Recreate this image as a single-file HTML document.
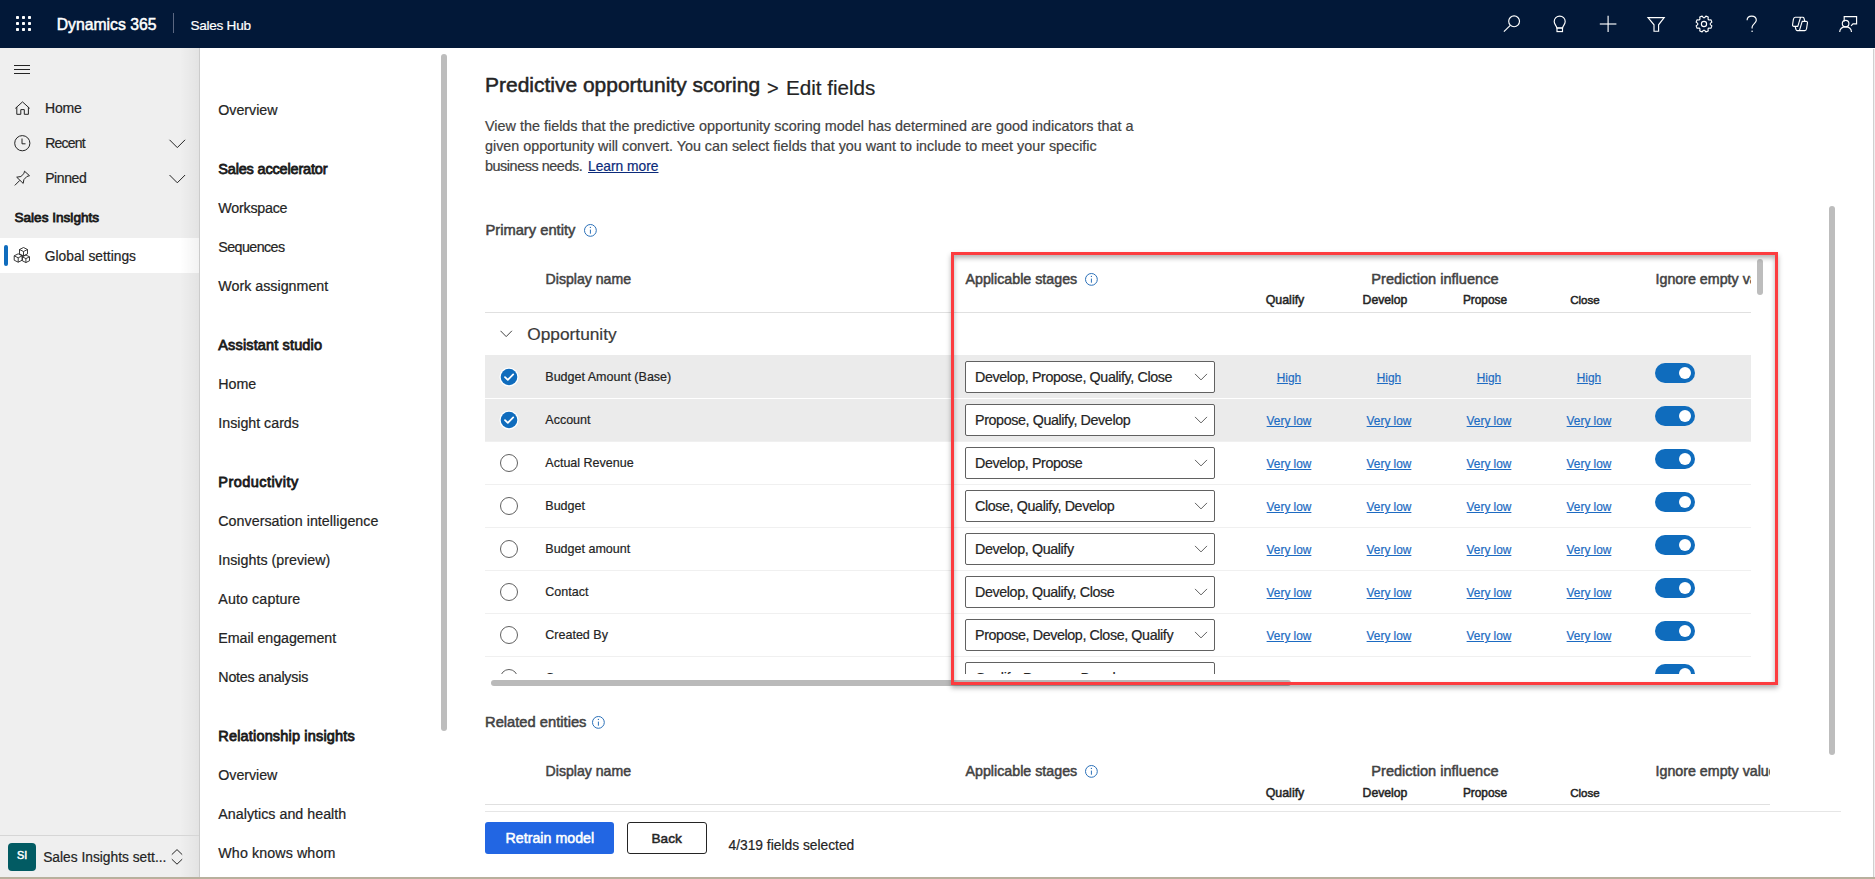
<!DOCTYPE html>
<html><head><meta charset="utf-8"><style>
html,body{margin:0;padding:0;}
body{width:1875px;height:879px;position:relative;overflow:hidden;background:#fff;font-family:"Liberation Sans", sans-serif;}
.r{position:absolute;}
.t{position:absolute;white-space:nowrap;}
</style></head><body>
<div class="r" style="left:0px;top:0px;width:1875px;height:48px;background:#021838;"></div>
<div class="r" style="left:15.9px;top:15.9px;width:3.2px;height:3.2px;background:#fff;border-radius:0.8px;"></div>
<div class="r" style="left:15.9px;top:21.9px;width:3.2px;height:3.2px;background:#fff;border-radius:0.8px;"></div>
<div class="r" style="left:15.9px;top:27.9px;width:3.2px;height:3.2px;background:#fff;border-radius:0.8px;"></div>
<div class="r" style="left:21.9px;top:15.9px;width:3.2px;height:3.2px;background:#fff;border-radius:0.8px;"></div>
<div class="r" style="left:21.9px;top:21.9px;width:3.2px;height:3.2px;background:#fff;border-radius:0.8px;"></div>
<div class="r" style="left:21.9px;top:27.9px;width:3.2px;height:3.2px;background:#fff;border-radius:0.8px;"></div>
<div class="r" style="left:27.9px;top:15.9px;width:3.2px;height:3.2px;background:#fff;border-radius:0.8px;"></div>
<div class="r" style="left:27.9px;top:21.9px;width:3.2px;height:3.2px;background:#fff;border-radius:0.8px;"></div>
<div class="r" style="left:27.9px;top:27.9px;width:3.2px;height:3.2px;background:#fff;border-radius:0.8px;"></div>
<div class="t" style="left:56.7px;top:15px;font-size:15.74px;line-height:19.68px;font-weight:400;color:#fff;-webkit-text-stroke:0.5px #fff;">Dynamics 365</div>
<div class="r" style="left:173px;top:13px;width:1px;height:20px;background:#5b6781;"></div>
<div class="t" style="left:190.5px;top:17px;font-size:13.6px;line-height:17.0px;font-weight:400;color:#fff;-webkit-text-stroke:0.2px #fff;letter-spacing:-0.281px;">Sales Hub</div>
<svg class="r" style="left:0;top:0" width="1875" height="48"><circle cx="1514.1" cy="21.3" r="5.4" stroke="#fff" fill="none" stroke-width="1.15"/><line x1="1503.9" y1="31.7" x2="1510.3" y2="25.3" stroke="#fff" fill="none" stroke-width="1.15"/><path d="M1556.8,28 C1556.6,25.8 1554.2,24.6 1554.2,21.6 A5.5,5.5 0 1 1 1565.2,21.6 C1565.2,24.6 1562.8,25.8 1562.6,28 Z" stroke="#fff" fill="none" stroke-width="1.15"/><rect x="1557" y="28" width="5.5" height="3.6" stroke="#fff" fill="none" stroke-width="1.15"/><line x1="1599.8" y1="24" x2="1616.4" y2="24" stroke="#fff" fill="none" stroke-width="1.15"/><line x1="1608.1" y1="15.8" x2="1608.1" y2="32" stroke="#fff" fill="none" stroke-width="1.15"/><path d="M1648,17.6 H1664.2 L1658.6,24.8 V31.2 H1654 V24.8 Z" stroke="#fff" fill="none" stroke-width="1.15"/><path d="M1704.60,17.73 L1705.89,16.12 L1708.23,17.09 L1708.01,19.14 L1708.86,19.99 L1710.91,19.77 L1711.88,22.11 L1710.27,23.40 L1710.27,24.60 L1711.88,25.89 L1710.91,28.23 L1708.86,28.01 L1708.01,28.86 L1708.23,30.91 L1705.89,31.88 L1704.60,30.27 L1703.40,30.27 L1702.11,31.88 L1699.77,30.91 L1699.99,28.86 L1699.14,28.01 L1697.09,28.23 L1696.12,25.89 L1697.73,24.60 L1697.73,23.40 L1696.12,22.11 L1697.09,19.77 L1699.14,19.99 L1699.99,19.14 L1699.77,17.09 L1702.11,16.12 L1703.40,17.73 Z" stroke="#fff" fill="none" stroke-width="1.15" stroke-linejoin="round"/><circle cx="1704" cy="24" r="2.6" stroke="#fff" fill="none" stroke-width="1.15"/><path d="M1747.1,20.2 C1747.1,17.6 1749.1,16.1 1751.7,16.1 C1754.4,16.1 1756.3,17.9 1756.3,20.3 C1756.3,23.1 1752.4,24 1752.1,27 V28.6" stroke="#fff" fill="none" stroke-width="1.15"/><circle cx="1752.1" cy="31.2" r="0.8" fill="#fff"/><path d="M1795.2,17.2 H1800.6 L1797.8,26.3 H1794 Q1792.3,26.3 1792.6,24.5 L1793.4,19.3 Q1793.8,17.2 1795.2,17.2 Z M1804.8,30.6 H1799.4 L1802.2,21.3 H1806 Q1807.7,21.3 1807.4,23.1 L1806.6,28.5 Q1806.2,30.6 1804.8,30.6 Z M1800.6,17.2 H1802.9 Q1803.6,17.2 1804,18.3 L1804.9,21.3 M1799.4,30.6 H1797.1 Q1796.4,30.6 1796,29.5 L1795.1,26.3" stroke="#fff" fill="none" stroke-width="1.15" stroke-width="1" stroke-linejoin="round"/><path d="M1844.2,21.5 V16.6 H1856.6 V23.9 H1853 L1851,25.8" stroke="#fff" fill="none" stroke-width="1.15"/><circle cx="1845.6" cy="23.6" r="3.3" stroke="#fff" fill="none" stroke-width="1.15"/><path d="M1839.7,32 C1839.9,28.8 1842.3,26.9 1845.6,26.9 C1848.9,26.9 1851.3,28.8 1851.5,32" stroke="#fff" fill="none" stroke-width="1.15"/></svg>
<div class="r" style="left:0px;top:48px;width:199px;height:829px;background:#efefef;"></div>
<div class="r" style="left:199px;top:48px;width:1px;height:829px;background:#cbcbcb;"></div>
<div class="r" style="left:14px;top:64.5px;width:16px;height:1px;background:#242424;"></div>
<div class="r" style="left:14px;top:68.5px;width:16px;height:1px;background:#242424;"></div>
<div class="r" style="left:14px;top:72.5px;width:16px;height:1px;background:#242424;"></div>
<svg class="r" style="left:0;top:0" width="200" height="879"><path d="M15.3,108.4 L22.5,101.9 L29.7,108.4 M16.8,107 V114.3 H20.8 V109.6 H24.3 V114.3 H28.4 V107" stroke="#242424" fill="none" stroke-width="1" stroke-linejoin="round"/><circle cx="22.3" cy="143.2" r="7.6" stroke="#242424" fill="none" stroke-width="1"/><path d="M22,138.5 V143.8 H25.5" stroke="#242424" fill="none" stroke-width="1"/><path d="M24.5,171.2 L29.5,175.7 L26.9,176.5 L23.9,179.6 L23.2,183.4 L16.7,177.2 L20.9,176.5 L23.9,173.6 Z M19.8,180.4 L14.8,185.4" stroke="#242424" fill="none" stroke-width="1" stroke-linejoin="round"/><path d="M169.5,139.8 L177.3,147.6 L185.1,139.8" stroke="#242424" fill="none" stroke-width="1"/><path d="M169.5,175 L177.3,182.8 L185.1,175" stroke="#242424" fill="none" stroke-width="1"/></svg>
<div class="t" style="left:45px;top:100px;font-size:14px;line-height:17.5px;font-weight:400;color:#242424;-webkit-text-stroke:0.2px #242424;letter-spacing:-0.148px;">Home</div>
<div class="t" style="left:45.2px;top:135px;font-size:14px;line-height:17.5px;font-weight:400;color:#242424;-webkit-text-stroke:0.2px #242424;letter-spacing:-0.771px;">Recent</div>
<div class="t" style="left:45.2px;top:170px;font-size:14px;line-height:17.5px;font-weight:400;color:#242424;-webkit-text-stroke:0.2px #242424;letter-spacing:-0.418px;">Pinned</div>
<div class="t" style="left:14.4px;top:209px;font-size:13.62px;line-height:17.02px;font-weight:400;color:#1a1a1a;-webkit-text-stroke:0.8px #1a1a1a;">Sales Insights</div>
<div class="r" style="left:0px;top:238px;width:199px;height:35px;background:#fff;"></div>
<div class="r" style="left:180px;top:48px;width:19px;height:829px;background:linear-gradient(to right, rgba(0,0,0,0) 0%, rgba(0,0,0,0.05) 100%);"></div>
<div class="r" style="left:4px;top:245px;width:3.5px;height:21px;background:#0f6cbd;border-radius:2px;"></div>
<svg class="r" style="left:0;top:0" width="200" height="879"><path d="M19.5,249.5 L23.5,247.5 L27.5,249.5 V253.9 L23.5,255.9 L19.5,253.9 Z M19.5,249.5 L23.5,251.5 L27.5,249.5 M23.5,251.5 V255.9" stroke="#242424" fill="none" stroke-width="0.9" stroke-linejoin="round"/><path d="M14.2,255.8 L18.2,253.8 L22.2,255.8 V260.2 L18.2,262.2 L14.2,260.2 Z M14.2,255.8 L18.2,257.8 L22.2,255.8 M18.2,257.8 V262.2" stroke="#242424" fill="none" stroke-width="0.9" stroke-linejoin="round"/><path d="M22.3,256.8 L25.900000000000002,255 L29.5,256.8 V260.76 L25.900000000000002,262.56 L22.3,260.76 Z M22.3,256.8 L25.900000000000002,258.6 L29.5,256.8 M25.900000000000002,258.6 V262.56" stroke="#242424" fill="none" stroke-width="0.9" stroke-linejoin="round"/></svg>
<div class="t" style="left:44.8px;top:248px;font-size:13.79px;line-height:17.24px;font-weight:400;color:#242424;-webkit-text-stroke:0.2px #242424;">Global settings</div>
<div class="r" style="left:0px;top:835px;width:199px;height:1px;background:#d6d6d6;"></div>
<div class="r" style="left:8px;top:843px;width:28px;height:28px;background:#025b63;border-radius:4px;"></div>
<div class="t" style="left:17px;top:849px;font-size:10.8px;line-height:13.5px;font-weight:400;color:#fff;-webkit-text-stroke:0.5px #fff;">SI</div>
<div class="t" style="left:43.2px;top:849px;font-size:13.77px;line-height:17.21px;font-weight:400;color:#242424;-webkit-text-stroke:0.2px #242424;">Sales Insights sett...</div>
<svg class="r" style="left:0;top:0" width="200" height="879"><path d="M171.8,854.6 L177,849.6 L182.2,854.6 M171.8,859.2 L177,864.2 L182.2,859.2" stroke="#242424" fill="none" stroke-width="1"/></svg>
<div class="r" style="left:441px;top:54px;width:6px;height:677px;background:#bdbdbd;border-radius:3px;"></div>
<div class="t" style="left:218.3px;top:102px;font-size:14.25px;line-height:17.81px;font-weight:400;color:#242424;-webkit-text-stroke:0.2px #242424;letter-spacing:-0.026px;">Overview</div>
<div class="t" style="left:218.3px;top:160px;font-size:14.5px;line-height:18.12px;font-weight:400;color:#1a1a1a;-webkit-text-stroke:0.8px #1a1a1a;letter-spacing:-0.176px;">Sales accelerator</div>
<div class="t" style="left:218.3px;top:200px;font-size:14.25px;line-height:17.81px;font-weight:400;color:#242424;-webkit-text-stroke:0.2px #242424;letter-spacing:-0.226px;">Workspace</div>
<div class="t" style="left:218.3px;top:239px;font-size:14.25px;line-height:17.81px;font-weight:400;color:#242424;-webkit-text-stroke:0.2px #242424;letter-spacing:-0.575px;">Sequences</div>
<div class="t" style="left:218.3px;top:278px;font-size:14.25px;line-height:17.81px;font-weight:400;color:#242424;-webkit-text-stroke:0.2px #242424;letter-spacing:0.01px;">Work assignment</div>
<div class="t" style="left:218.3px;top:336px;font-size:14.5px;line-height:18.12px;font-weight:400;color:#1a1a1a;-webkit-text-stroke:0.8px #1a1a1a;letter-spacing:0.144px;">Assistant studio</div>
<div class="t" style="left:218.3px;top:376px;font-size:14.25px;line-height:17.81px;font-weight:400;color:#242424;-webkit-text-stroke:0.2px #242424;letter-spacing:-0.003px;">Home</div>
<div class="t" style="left:218.3px;top:415px;font-size:14.25px;line-height:17.81px;font-weight:400;color:#242424;-webkit-text-stroke:0.2px #242424;letter-spacing:-0.015px;">Insight cards</div>
<div class="t" style="left:218.3px;top:473px;font-size:14.5px;line-height:18.12px;font-weight:400;color:#1a1a1a;-webkit-text-stroke:0.8px #1a1a1a;letter-spacing:0.451px;">Productivity</div>
<div class="t" style="left:218.3px;top:513px;font-size:14.25px;line-height:17.81px;font-weight:400;color:#242424;-webkit-text-stroke:0.2px #242424;letter-spacing:0.037px;">Conversation intelligence</div>
<div class="t" style="left:218.3px;top:552px;font-size:14.25px;line-height:17.81px;font-weight:400;color:#242424;-webkit-text-stroke:0.2px #242424;letter-spacing:0.02px;">Insights (preview)</div>
<div class="t" style="left:218.3px;top:591px;font-size:14.25px;line-height:17.81px;font-weight:400;color:#242424;-webkit-text-stroke:0.2px #242424;letter-spacing:0.109px;">Auto capture</div>
<div class="t" style="left:218.3px;top:630px;font-size:14.25px;line-height:17.81px;font-weight:400;color:#242424;-webkit-text-stroke:0.2px #242424;letter-spacing:-0.068px;">Email engagement</div>
<div class="t" style="left:218.3px;top:669px;font-size:14.25px;line-height:17.81px;font-weight:400;color:#242424;-webkit-text-stroke:0.2px #242424;letter-spacing:-0.205px;">Notes analysis</div>
<div class="t" style="left:218.3px;top:727px;font-size:14.5px;line-height:18.12px;font-weight:400;color:#1a1a1a;-webkit-text-stroke:0.8px #1a1a1a;letter-spacing:0.171px;">Relationship insights</div>
<div class="t" style="left:218.3px;top:767px;font-size:14.25px;line-height:17.81px;font-weight:400;color:#242424;-webkit-text-stroke:0.2px #242424;letter-spacing:-0.041px;">Overview</div>
<div class="t" style="left:218.3px;top:806px;font-size:14.25px;line-height:17.81px;font-weight:400;color:#242424;-webkit-text-stroke:0.2px #242424;letter-spacing:0.019px;">Analytics and health</div>
<div class="t" style="left:218.3px;top:845px;font-size:14.25px;line-height:17.81px;font-weight:400;color:#242424;-webkit-text-stroke:0.2px #242424;letter-spacing:0.106px;">Who knows whom</div>
<div class="r" style="left:1873px;top:49px;width:1px;height:828px;background:#d0d0d0;"></div>
<div class="r" style="left:1874px;top:49px;width:1px;height:828px;background:#f0f0f0;"></div>
<div class="r" style="left:0px;top:877px;width:1875px;height:2px;background:#b8b09d;"></div>
<div class="r" style="left:1829px;top:206px;width:6px;height:549px;background:#bdbdbd;border-radius:3px;"></div>
<div class="t" style="left:485px;top:72px;font-size:20.97px;line-height:26.21px;font-weight:400;color:#242424;-webkit-text-stroke:0.5px #242424;">Predictive opportunity scoring</div>
<div class="t" style="left:767px;top:76px;font-size:20px;line-height:25.0px;font-weight:400;color:#242424;-webkit-text-stroke:0.2px #242424;">&gt;</div>
<div class="t" style="left:786px;top:75px;font-size:20.62px;line-height:25.78px;font-weight:400;color:#242424;-webkit-text-stroke:0.2px #242424;">Edit fields</div>
<div class="t" style="left:485px;top:117px;font-size:14.4px;line-height:18.0px;font-weight:400;color:#424242;-webkit-text-stroke:0.2px #424242;">View the fields that the predictive opportunity scoring model has determined are good indicators that a</div>
<div class="t" style="left:485px;top:138px;font-size:14.34px;line-height:17.93px;font-weight:400;color:#424242;-webkit-text-stroke:0.2px #424242;">given opportunity will convert. You can select fields that you want to include to meet your specific</div>
<div class="t" style="left:485px;top:157px;font-size:14.4px;line-height:18.0px;font-weight:400;color:#424242;-webkit-text-stroke:0.2px #424242;letter-spacing:-0.45px;">business needs.</div>
<div class="t" style="left:588px;top:158px;font-size:13.79px;line-height:17.24px;font-weight:400;color:#0b2a7a;-webkit-text-stroke:0.2px #0b2a7a;text-decoration:underline;">Learn more</div>
<div class="t" style="left:485.4px;top:221px;font-size:14.74px;line-height:18.43px;font-weight:400;color:#424242;-webkit-text-stroke:0.5px #424242;">Primary entity</div>
<svg class="r" style="left:582.9px;top:223.0px;" width="14.8" height="14.8" viewBox="0 0 14.8 14.8"><circle cx="7.4" cy="7.4" r="5.9" stroke="#2a6fb8" fill="none" stroke-width="1"/><line x1="7.4" y1="6.6000000000000005" x2="7.4" y2="10.7" stroke="#2a6fb8" stroke-width="1"/><circle cx="7.4" cy="4.4" r="0.65" fill="#2a6fb8"/></svg>
<div class="r" style="left:485px;top:255px;width:1266px;height:419px;overflow:hidden;">
<div class="t" style="left:60.6px;top:16px;font-size:14.1px;line-height:17.62px;font-weight:400;color:#424242;-webkit-text-stroke:0.5px #424242;">Display name</div>
<div class="t" style="left:480.5px;top:16px;font-size:14.25px;line-height:17.81px;font-weight:400;color:#424242;-webkit-text-stroke:0.5px #424242;">Applicable stages</div>
<svg class="r" style="left:599.3000000000001px;top:17.1px;" width="14.8" height="14.8" viewBox="0 0 14.8 14.8"><circle cx="7.4" cy="7.4" r="5.9" stroke="#2a6fb8" fill="none" stroke-width="1"/><line x1="7.4" y1="6.6000000000000005" x2="7.4" y2="10.7" stroke="#2a6fb8" stroke-width="1"/><circle cx="7.4" cy="4.4" r="0.65" fill="#2a6fb8"/></svg>
<div class="t" style="left:886.3px;top:15px;font-size:14.59px;line-height:18.24px;font-weight:400;color:#424242;-webkit-text-stroke:0.5px #424242;">Prediction influence</div>
<div class="t" style="left:1170.5px;top:16px;font-size:14.25px;line-height:17.81px;font-weight:400;color:#424242;-webkit-text-stroke:0.5px #424242;">Ignore empty values</div>
<div class="t" style="left:780.65px;top:38px;font-size:12.43px;line-height:15.54px;font-weight:400;color:#242424;-webkit-text-stroke:0.5px #242424;">Qualify</div>
<div class="t" style="left:877.6px;top:38px;font-size:12.21px;line-height:15.26px;font-weight:400;color:#242424;-webkit-text-stroke:0.5px #242424;">Develop</div>
<div class="t" style="left:977.9px;top:38px;font-size:11.87px;line-height:14.84px;font-weight:400;color:#242424;-webkit-text-stroke:0.5px #242424;">Propose</div>
<div class="t" style="left:1085.2px;top:38px;font-size:11.58px;line-height:14.47px;font-weight:400;color:#242424;-webkit-text-stroke:0.5px #242424;">Close</div>
<div class="r" style="left:0px;top:57px;width:1266px;height:1px;background:#e0e0e0;"></div>
<svg class="r" style="left:15px;top:75px;" width="13" height="8" viewBox="0 0 13 8"><path d="M0.5,0.8 L6.2,6.6 L11.9,0.8" stroke="#424242" fill="none" stroke-width="1"/></svg>
<div class="t" style="left:42.3px;top:69px;font-size:17.3px;line-height:21.62px;font-weight:400;color:#3b3a39;-webkit-text-stroke:0.2px #3b3a39;">Opportunity</div>
<div class="r" style="left:0px;top:100px;width:1266px;height:43px;background:#ebebeb;"></div>
<svg class="r" style="left:14px;top:112px;" width="20" height="20" viewBox="0 0 20 20"><circle cx="10" cy="10" r="9.6" fill="#fff"/><circle cx="10" cy="10" r="8.3" fill="#0f6cbd"/><path d="M6,10.2 L8.8,12.9 L14.2,7.4" stroke="#fff" stroke-width="1.8" fill="none" stroke-linecap="round" stroke-linejoin="round"/></svg>
<div class="t" style="left:60.3px;top:115px;font-size:12.52px;line-height:15.65px;font-weight:400;color:#242424;-webkit-text-stroke:0.2px #242424;">Budget Amount (Base)</div>
<div class="r" style="left:480px;top:106px;width:250px;height:32px;background:#fff;border:1px solid #616161;border-radius:2px;box-sizing:border-box;"></div>
<div class="t" style="left:490px;top:114px;font-size:14.3px;line-height:17.88px;font-weight:400;color:#242424;-webkit-text-stroke:0.2px #242424;letter-spacing:-0.389px;">Develop, Propose, Qualify, Close</div>
<svg class="r" style="left:709px;top:118px;" width="14" height="8" viewBox="0 0 14 8"><path d="M1,0.9 L7,6.9 L13,0.9" stroke="#616161" fill="none" stroke-width="1"/></svg>
<div class="t" style="left:791.81px;top:116px;font-size:11.85px;line-height:14.81px;font-weight:400;color:#1d6bc2;-webkit-text-stroke:0.2px #1d6bc2;text-decoration:underline;">High</div>
<div class="t" style="left:891.81px;top:116px;font-size:11.85px;line-height:14.81px;font-weight:400;color:#1d6bc2;-webkit-text-stroke:0.2px #1d6bc2;text-decoration:underline;">High</div>
<div class="t" style="left:991.81px;top:116px;font-size:11.85px;line-height:14.81px;font-weight:400;color:#1d6bc2;-webkit-text-stroke:0.2px #1d6bc2;text-decoration:underline;">High</div>
<div class="t" style="left:1091.81px;top:116px;font-size:11.85px;line-height:14.81px;font-weight:400;color:#1d6bc2;-webkit-text-stroke:0.2px #1d6bc2;text-decoration:underline;">High</div>
<div class="r" style="left:1170px;top:107.6px;width:40px;height:20px;background:#0f6cbd;border-radius:10px;"></div>
<div class="r" style="left:1194px;top:111.6px;width:12px;height:12px;background:#fff;border-radius:6px;"></div>
<div class="r" style="left:0px;top:143px;width:1266px;height:43px;background:#ebebeb;"></div>
<svg class="r" style="left:14px;top:155px;" width="20" height="20" viewBox="0 0 20 20"><circle cx="10" cy="10" r="9.6" fill="#fff"/><circle cx="10" cy="10" r="8.3" fill="#0f6cbd"/><path d="M6,10.2 L8.8,12.9 L14.2,7.4" stroke="#fff" stroke-width="1.8" fill="none" stroke-linecap="round" stroke-linejoin="round"/></svg>
<div class="t" style="left:60.3px;top:158px;font-size:12.52px;line-height:15.65px;font-weight:400;color:#242424;-webkit-text-stroke:0.2px #242424;">Account</div>
<div class="r" style="left:480px;top:149px;width:250px;height:32px;background:#fff;border:1px solid #616161;border-radius:2px;box-sizing:border-box;"></div>
<div class="t" style="left:490px;top:157px;font-size:14.3px;line-height:17.88px;font-weight:400;color:#242424;-webkit-text-stroke:0.2px #242424;letter-spacing:-0.389px;">Propose, Qualify, Develop</div>
<svg class="r" style="left:709px;top:161px;" width="14" height="8" viewBox="0 0 14 8"><path d="M1,0.9 L7,6.9 L13,0.9" stroke="#616161" fill="none" stroke-width="1"/></svg>
<div class="t" style="left:781.61px;top:159px;font-size:11.85px;line-height:14.81px;font-weight:400;color:#1d6bc2;-webkit-text-stroke:0.2px #1d6bc2;text-decoration:underline;">Very low</div>
<div class="t" style="left:881.61px;top:159px;font-size:11.85px;line-height:14.81px;font-weight:400;color:#1d6bc2;-webkit-text-stroke:0.2px #1d6bc2;text-decoration:underline;">Very low</div>
<div class="t" style="left:981.61px;top:159px;font-size:11.85px;line-height:14.81px;font-weight:400;color:#1d6bc2;-webkit-text-stroke:0.2px #1d6bc2;text-decoration:underline;">Very low</div>
<div class="t" style="left:1081.61px;top:159px;font-size:11.85px;line-height:14.81px;font-weight:400;color:#1d6bc2;-webkit-text-stroke:0.2px #1d6bc2;text-decoration:underline;">Very low</div>
<div class="r" style="left:1170px;top:150.6px;width:40px;height:20px;background:#0f6cbd;border-radius:10px;"></div>
<div class="r" style="left:1194px;top:154.6px;width:12px;height:12px;background:#fff;border-radius:6px;"></div>
<svg class="r" style="left:14px;top:198px;" width="20" height="20" viewBox="0 0 20 20"><circle cx="10" cy="10" r="8.5" fill="none" stroke="#616161" stroke-width="1"/></svg>
<div class="t" style="left:60.3px;top:201px;font-size:12.52px;line-height:15.65px;font-weight:400;color:#242424;-webkit-text-stroke:0.2px #242424;">Actual Revenue</div>
<div class="r" style="left:480px;top:192px;width:250px;height:32px;background:#fff;border:1px solid #616161;border-radius:2px;box-sizing:border-box;"></div>
<div class="t" style="left:490px;top:200px;font-size:14.3px;line-height:17.88px;font-weight:400;color:#242424;-webkit-text-stroke:0.2px #242424;letter-spacing:-0.389px;">Develop, Propose</div>
<svg class="r" style="left:709px;top:204px;" width="14" height="8" viewBox="0 0 14 8"><path d="M1,0.9 L7,6.9 L13,0.9" stroke="#616161" fill="none" stroke-width="1"/></svg>
<div class="t" style="left:781.61px;top:202px;font-size:11.85px;line-height:14.81px;font-weight:400;color:#1d6bc2;-webkit-text-stroke:0.2px #1d6bc2;text-decoration:underline;">Very low</div>
<div class="t" style="left:881.61px;top:202px;font-size:11.85px;line-height:14.81px;font-weight:400;color:#1d6bc2;-webkit-text-stroke:0.2px #1d6bc2;text-decoration:underline;">Very low</div>
<div class="t" style="left:981.61px;top:202px;font-size:11.85px;line-height:14.81px;font-weight:400;color:#1d6bc2;-webkit-text-stroke:0.2px #1d6bc2;text-decoration:underline;">Very low</div>
<div class="t" style="left:1081.61px;top:202px;font-size:11.85px;line-height:14.81px;font-weight:400;color:#1d6bc2;-webkit-text-stroke:0.2px #1d6bc2;text-decoration:underline;">Very low</div>
<div class="r" style="left:1170px;top:193.6px;width:40px;height:20px;background:#0f6cbd;border-radius:10px;"></div>
<div class="r" style="left:1194px;top:197.6px;width:12px;height:12px;background:#fff;border-radius:6px;"></div>
<svg class="r" style="left:14px;top:241px;" width="20" height="20" viewBox="0 0 20 20"><circle cx="10" cy="10" r="8.5" fill="none" stroke="#616161" stroke-width="1"/></svg>
<div class="t" style="left:60.3px;top:244px;font-size:12.52px;line-height:15.65px;font-weight:400;color:#242424;-webkit-text-stroke:0.2px #242424;">Budget</div>
<div class="r" style="left:480px;top:235px;width:250px;height:32px;background:#fff;border:1px solid #616161;border-radius:2px;box-sizing:border-box;"></div>
<div class="t" style="left:490px;top:243px;font-size:14.3px;line-height:17.88px;font-weight:400;color:#242424;-webkit-text-stroke:0.2px #242424;letter-spacing:-0.389px;">Close, Qualify, Develop</div>
<svg class="r" style="left:709px;top:247px;" width="14" height="8" viewBox="0 0 14 8"><path d="M1,0.9 L7,6.9 L13,0.9" stroke="#616161" fill="none" stroke-width="1"/></svg>
<div class="t" style="left:781.61px;top:245px;font-size:11.85px;line-height:14.81px;font-weight:400;color:#1d6bc2;-webkit-text-stroke:0.2px #1d6bc2;text-decoration:underline;">Very low</div>
<div class="t" style="left:881.61px;top:245px;font-size:11.85px;line-height:14.81px;font-weight:400;color:#1d6bc2;-webkit-text-stroke:0.2px #1d6bc2;text-decoration:underline;">Very low</div>
<div class="t" style="left:981.61px;top:245px;font-size:11.85px;line-height:14.81px;font-weight:400;color:#1d6bc2;-webkit-text-stroke:0.2px #1d6bc2;text-decoration:underline;">Very low</div>
<div class="t" style="left:1081.61px;top:245px;font-size:11.85px;line-height:14.81px;font-weight:400;color:#1d6bc2;-webkit-text-stroke:0.2px #1d6bc2;text-decoration:underline;">Very low</div>
<div class="r" style="left:1170px;top:236.6px;width:40px;height:20px;background:#0f6cbd;border-radius:10px;"></div>
<div class="r" style="left:1194px;top:240.6px;width:12px;height:12px;background:#fff;border-radius:6px;"></div>
<svg class="r" style="left:14px;top:284px;" width="20" height="20" viewBox="0 0 20 20"><circle cx="10" cy="10" r="8.5" fill="none" stroke="#616161" stroke-width="1"/></svg>
<div class="t" style="left:60.3px;top:287px;font-size:12.52px;line-height:15.65px;font-weight:400;color:#242424;-webkit-text-stroke:0.2px #242424;">Budget amount</div>
<div class="r" style="left:480px;top:278px;width:250px;height:32px;background:#fff;border:1px solid #616161;border-radius:2px;box-sizing:border-box;"></div>
<div class="t" style="left:490px;top:286px;font-size:14.3px;line-height:17.88px;font-weight:400;color:#242424;-webkit-text-stroke:0.2px #242424;letter-spacing:-0.389px;">Develop, Qualify</div>
<svg class="r" style="left:709px;top:290px;" width="14" height="8" viewBox="0 0 14 8"><path d="M1,0.9 L7,6.9 L13,0.9" stroke="#616161" fill="none" stroke-width="1"/></svg>
<div class="t" style="left:781.61px;top:288px;font-size:11.85px;line-height:14.81px;font-weight:400;color:#1d6bc2;-webkit-text-stroke:0.2px #1d6bc2;text-decoration:underline;">Very low</div>
<div class="t" style="left:881.61px;top:288px;font-size:11.85px;line-height:14.81px;font-weight:400;color:#1d6bc2;-webkit-text-stroke:0.2px #1d6bc2;text-decoration:underline;">Very low</div>
<div class="t" style="left:981.61px;top:288px;font-size:11.85px;line-height:14.81px;font-weight:400;color:#1d6bc2;-webkit-text-stroke:0.2px #1d6bc2;text-decoration:underline;">Very low</div>
<div class="t" style="left:1081.61px;top:288px;font-size:11.85px;line-height:14.81px;font-weight:400;color:#1d6bc2;-webkit-text-stroke:0.2px #1d6bc2;text-decoration:underline;">Very low</div>
<div class="r" style="left:1170px;top:279.6px;width:40px;height:20px;background:#0f6cbd;border-radius:10px;"></div>
<div class="r" style="left:1194px;top:283.6px;width:12px;height:12px;background:#fff;border-radius:6px;"></div>
<svg class="r" style="left:14px;top:327px;" width="20" height="20" viewBox="0 0 20 20"><circle cx="10" cy="10" r="8.5" fill="none" stroke="#616161" stroke-width="1"/></svg>
<div class="t" style="left:60.3px;top:330px;font-size:12.52px;line-height:15.65px;font-weight:400;color:#242424;-webkit-text-stroke:0.2px #242424;">Contact</div>
<div class="r" style="left:480px;top:321px;width:250px;height:32px;background:#fff;border:1px solid #616161;border-radius:2px;box-sizing:border-box;"></div>
<div class="t" style="left:490px;top:329px;font-size:14.3px;line-height:17.88px;font-weight:400;color:#242424;-webkit-text-stroke:0.2px #242424;letter-spacing:-0.389px;">Develop, Qualify, Close</div>
<svg class="r" style="left:709px;top:333px;" width="14" height="8" viewBox="0 0 14 8"><path d="M1,0.9 L7,6.9 L13,0.9" stroke="#616161" fill="none" stroke-width="1"/></svg>
<div class="t" style="left:781.61px;top:331px;font-size:11.85px;line-height:14.81px;font-weight:400;color:#1d6bc2;-webkit-text-stroke:0.2px #1d6bc2;text-decoration:underline;">Very low</div>
<div class="t" style="left:881.61px;top:331px;font-size:11.85px;line-height:14.81px;font-weight:400;color:#1d6bc2;-webkit-text-stroke:0.2px #1d6bc2;text-decoration:underline;">Very low</div>
<div class="t" style="left:981.61px;top:331px;font-size:11.85px;line-height:14.81px;font-weight:400;color:#1d6bc2;-webkit-text-stroke:0.2px #1d6bc2;text-decoration:underline;">Very low</div>
<div class="t" style="left:1081.61px;top:331px;font-size:11.85px;line-height:14.81px;font-weight:400;color:#1d6bc2;-webkit-text-stroke:0.2px #1d6bc2;text-decoration:underline;">Very low</div>
<div class="r" style="left:1170px;top:322.6px;width:40px;height:20px;background:#0f6cbd;border-radius:10px;"></div>
<div class="r" style="left:1194px;top:326.6px;width:12px;height:12px;background:#fff;border-radius:6px;"></div>
<svg class="r" style="left:14px;top:370px;" width="20" height="20" viewBox="0 0 20 20"><circle cx="10" cy="10" r="8.5" fill="none" stroke="#616161" stroke-width="1"/></svg>
<div class="t" style="left:60.3px;top:373px;font-size:12.52px;line-height:15.65px;font-weight:400;color:#242424;-webkit-text-stroke:0.2px #242424;">Created By</div>
<div class="r" style="left:480px;top:364px;width:250px;height:32px;background:#fff;border:1px solid #616161;border-radius:2px;box-sizing:border-box;"></div>
<div class="t" style="left:490px;top:372px;font-size:14.3px;line-height:17.88px;font-weight:400;color:#242424;-webkit-text-stroke:0.2px #242424;letter-spacing:-0.389px;">Propose, Develop, Close, Qualify</div>
<svg class="r" style="left:709px;top:376px;" width="14" height="8" viewBox="0 0 14 8"><path d="M1,0.9 L7,6.9 L13,0.9" stroke="#616161" fill="none" stroke-width="1"/></svg>
<div class="t" style="left:781.61px;top:374px;font-size:11.85px;line-height:14.81px;font-weight:400;color:#1d6bc2;-webkit-text-stroke:0.2px #1d6bc2;text-decoration:underline;">Very low</div>
<div class="t" style="left:881.61px;top:374px;font-size:11.85px;line-height:14.81px;font-weight:400;color:#1d6bc2;-webkit-text-stroke:0.2px #1d6bc2;text-decoration:underline;">Very low</div>
<div class="t" style="left:981.61px;top:374px;font-size:11.85px;line-height:14.81px;font-weight:400;color:#1d6bc2;-webkit-text-stroke:0.2px #1d6bc2;text-decoration:underline;">Very low</div>
<div class="t" style="left:1081.61px;top:374px;font-size:11.85px;line-height:14.81px;font-weight:400;color:#1d6bc2;-webkit-text-stroke:0.2px #1d6bc2;text-decoration:underline;">Very low</div>
<div class="r" style="left:1170px;top:365.6px;width:40px;height:20px;background:#0f6cbd;border-radius:10px;"></div>
<div class="r" style="left:1194px;top:369.6px;width:12px;height:12px;background:#fff;border-radius:6px;"></div>
<svg class="r" style="left:14px;top:413px;" width="20" height="20" viewBox="0 0 20 20"><circle cx="10" cy="10" r="8.5" fill="none" stroke="#616161" stroke-width="1"/></svg>
<div class="t" style="left:60.3px;top:416px;font-size:12.52px;line-height:15.65px;font-weight:400;color:#242424;-webkit-text-stroke:0.2px #242424;">Currency</div>
<div class="r" style="left:480px;top:407px;width:250px;height:32px;background:#fff;border:1px solid #616161;border-radius:2px;box-sizing:border-box;"></div>
<div class="t" style="left:490px;top:415px;font-size:14.3px;line-height:17.88px;font-weight:400;color:#242424;-webkit-text-stroke:0.2px #242424;letter-spacing:-0.389px;">Qualify, Propose, Develop</div>
<svg class="r" style="left:709px;top:419px;" width="14" height="8" viewBox="0 0 14 8"><path d="M1,0.9 L7,6.9 L13,0.9" stroke="#616161" fill="none" stroke-width="1"/></svg>
<div class="t" style="left:781.61px;top:417px;font-size:11.85px;line-height:14.81px;font-weight:400;color:#1d6bc2;-webkit-text-stroke:0.2px #1d6bc2;text-decoration:underline;">Very low</div>
<div class="t" style="left:881.61px;top:417px;font-size:11.85px;line-height:14.81px;font-weight:400;color:#1d6bc2;-webkit-text-stroke:0.2px #1d6bc2;text-decoration:underline;">Very low</div>
<div class="t" style="left:981.61px;top:417px;font-size:11.85px;line-height:14.81px;font-weight:400;color:#1d6bc2;-webkit-text-stroke:0.2px #1d6bc2;text-decoration:underline;">Very low</div>
<div class="t" style="left:1081.61px;top:417px;font-size:11.85px;line-height:14.81px;font-weight:400;color:#1d6bc2;-webkit-text-stroke:0.2px #1d6bc2;text-decoration:underline;">Very low</div>
<div class="r" style="left:1170px;top:408.6px;width:40px;height:20px;background:#0f6cbd;border-radius:10px;"></div>
<div class="r" style="left:1194px;top:412.6px;width:12px;height:12px;background:#fff;border-radius:6px;"></div>
<div class="r" style="left:0px;top:143px;width:1266px;height:1px;background:#ffffff;"></div>
<div class="r" style="left:0px;top:186px;width:1266px;height:1px;background:#f0f0f0;"></div>
<div class="r" style="left:0px;top:229px;width:1266px;height:1px;background:#f0f0f0;"></div>
<div class="r" style="left:0px;top:272px;width:1266px;height:1px;background:#f0f0f0;"></div>
<div class="r" style="left:0px;top:315px;width:1266px;height:1px;background:#f0f0f0;"></div>
<div class="r" style="left:0px;top:358px;width:1266px;height:1px;background:#f0f0f0;"></div>
<div class="r" style="left:0px;top:401px;width:1266px;height:1px;background:#f0f0f0;"></div>
</div>
<div class="r" style="left:491px;top:680px;width:800px;height:6px;background:#bababa;border-radius:3px;"></div>
<div class="r" style="left:1757px;top:259px;width:6px;height:36px;background:#bdbdbd;border-radius:3px;"></div>
<div class="t" style="left:485px;top:713px;font-size:14.73px;line-height:18.41px;font-weight:400;color:#424242;-webkit-text-stroke:0.5px #424242;">Related entities</div>
<svg class="r" style="left:591.3000000000001px;top:715.3000000000001px;" width="14.8" height="14.8" viewBox="0 0 14.8 14.8"><circle cx="7.4" cy="7.4" r="5.9" stroke="#2a6fb8" fill="none" stroke-width="1"/><line x1="7.4" y1="6.6000000000000005" x2="7.4" y2="10.7" stroke="#2a6fb8" stroke-width="1"/><circle cx="7.4" cy="4.4" r="0.65" fill="#2a6fb8"/></svg>
<div class="t" style="left:545.6px;top:763px;font-size:14.1px;line-height:17.62px;font-weight:400;color:#424242;-webkit-text-stroke:0.5px #424242;">Display name</div>
<div class="t" style="left:965.5px;top:763px;font-size:14.25px;line-height:17.81px;font-weight:400;color:#424242;-webkit-text-stroke:0.5px #424242;">Applicable stages</div>
<svg class="r" style="left:1084.3px;top:764.1px;" width="14.8" height="14.8" viewBox="0 0 14.8 14.8"><circle cx="7.4" cy="7.4" r="5.9" stroke="#2a6fb8" fill="none" stroke-width="1"/><line x1="7.4" y1="6.6000000000000005" x2="7.4" y2="10.7" stroke="#2a6fb8" stroke-width="1"/><circle cx="7.4" cy="4.4" r="0.65" fill="#2a6fb8"/></svg>
<div class="t" style="left:1371.3px;top:762px;font-size:14.59px;line-height:18.24px;font-weight:400;color:#424242;-webkit-text-stroke:0.5px #424242;">Prediction influence</div>
<div class="r" style="left:1655px;top:740px;width:115px;height:60px;overflow:hidden"><div class="t" style="left:0.5px;top:23px;font-size:14.25px;line-height:17.81px;font-weight:400;color:#424242;-webkit-text-stroke:0.5px #424242;">Ignore empty values</div>
</div>
<div class="t" style="left:1265.65px;top:786px;font-size:12.43px;line-height:15.54px;font-weight:400;color:#242424;-webkit-text-stroke:0.5px #242424;">Qualify</div>
<div class="t" style="left:1362.6px;top:786px;font-size:12.21px;line-height:15.26px;font-weight:400;color:#242424;-webkit-text-stroke:0.5px #242424;">Develop</div>
<div class="t" style="left:1462.9px;top:786px;font-size:11.87px;line-height:14.84px;font-weight:400;color:#242424;-webkit-text-stroke:0.5px #242424;">Propose</div>
<div class="t" style="left:1570.2px;top:786px;font-size:11.58px;line-height:14.47px;font-weight:400;color:#242424;-webkit-text-stroke:0.5px #242424;">Close</div>
<div class="r" style="left:485px;top:804px;width:1285px;height:1px;background:#e0e0e0;"></div>
<div class="r" style="left:485px;top:811px;width:1356px;height:1px;background:#e6e6e6;"></div>
<div class="r" style="left:485px;top:822px;width:129px;height:32px;background:#2266e3;border-radius:3px;"></div>
<div class="t" style="left:505.6px;top:830px;font-size:14.22px;line-height:17.78px;font-weight:400;color:#fff;-webkit-text-stroke:0.5px #fff;">Retrain model</div>
<div class="r" style="left:627px;top:822px;width:80px;height:32px;background:#fff;border:1px solid #242424;border-radius:3px;box-sizing:border-box;"></div>
<div class="t" style="left:651.5px;top:830px;font-size:13.6px;line-height:17.0px;font-weight:400;color:#242424;-webkit-text-stroke:0.5px #242424;">Back</div>
<div class="t" style="left:728.5px;top:837px;font-size:13.81px;line-height:17.26px;font-weight:400;color:#242424;-webkit-text-stroke:0.2px #242424;">4/319 fields selected</div>
<div class="r" style="left:951px;top:252px;width:827px;height:433px;box-sizing:border-box;border:3px solid #fc3c3f;box-shadow:0 3px 5px rgba(0,0,0,0.3), inset 0 3px 5px rgba(0,0,0,0.3);"></div>
</body></html>
